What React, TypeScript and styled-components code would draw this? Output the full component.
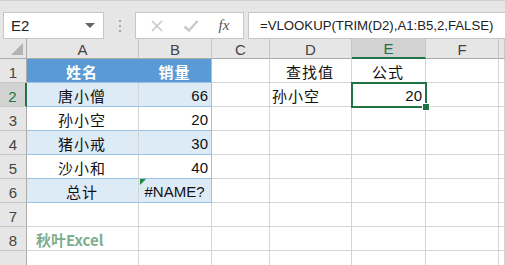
import React from "react";
import styled, { createGlobalStyle } from "styled-components";

const GlobalStyle = createGlobalStyle`
  html, body {
    margin: 0;
    padding: 0;
    background: #ffffff;
    overflow: hidden;
  }
  body {
    font-family: "Liberation Sans", "Noto Sans CJK SC", sans-serif;
  }
`;

const CJK = `"Noto Sans CJK SC", "Liberation Sans", sans-serif`;

const Page = styled.div`
  width: 505px;
  height: 265px;
  background: #e6e6e6;
  display: flex;
  flex-direction: column;
  overflow: hidden;
`;

const FormulaBar = styled.div`
  height: 48px;
  box-sizing: border-box;
  border-top: 1px solid #d0d0d0;
  display: flex;
  align-items: flex-start;
  padding: 11px 0 0 3px;
`;

const NameBox = styled.div`
  width: 101px;
  height: 27px;
  box-sizing: border-box;
  background: #fff;
  border: 1px solid #c6c6c6;
  display: flex;
  align-items: center;
  justify-content: space-between;
  padding: 0 8px 0 7px;
  font-size: 15px;
  color: #222;
`;

const Caret = styled.span`
  width: 0;
  height: 0;
  border-left: 5px solid transparent;
  border-right: 5px solid transparent;
  border-top: 5px solid #666;
`;

const Grip = styled.div`
  width: 31px;
  height: 27px;
  display: flex;
  flex-direction: column;
  align-items: center;
  justify-content: center;
  gap: 3px;

  span {
    width: 2px;
    height: 2px;
    background: #a8a8a8;
  }
`;

const ButtonBox = styled.div`
  width: 109px;
  height: 27px;
  box-sizing: border-box;
  background: #fff;
  border: 1px solid #c6c6c6;
  display: flex;
  align-items: center;
  justify-content: space-around;
  padding: 0 4px;
`;

const Fx = styled.span`
  font-family: "Liberation Serif", serif;
  font-style: italic;
  font-size: 15px;
  color: #555;
`;

const FormulaInput = styled.div`
  flex: 1;
  margin-left: 4px;
  height: 27px;
  box-sizing: border-box;
  background: #fff;
  border: 1px solid #c6c6c6;
  border-right: none;
  display: flex;
  align-items: center;
  padding-left: 11px;
  font-size: 13.2px;
  color: #222;
  white-space: nowrap;
`;

const Sheet = styled.div`
  flex: 1;
  position: relative;
  display: grid;
  grid-template-columns: 27px 112px 73px 58px 82px 74px 73px 1fr;
  grid-template-rows: 20px repeat(9, 24px);
  background: #fff;
`;

const Corner = styled.div`
  background: #e6e6e6;
  border-right: 1px solid #ababab;
  border-bottom: 1px solid #ababab;
  box-sizing: border-box;
  position: relative;

  &::after {
    content: "";
    position: absolute;
    right: 3px;
    bottom: 3px;
    width: 0;
    height: 0;
    border-left: 12px solid transparent;
    border-bottom: 12px solid #b4b4b4;
  }
`;

const ColHead = styled.div<{ $active?: boolean }>`
  background: ${({ $active }) => ($active ? "#d2d2d2" : "#e6e6e6")};
  box-sizing: border-box;
  border-right: 1px solid #c6c6c6;
  border-bottom: ${({ $active }) => ($active ? "2px solid #217346" : "1px solid #ababab")};
  display: flex;
  align-items: center;
  justify-content: center;
  font-size: 15px;
  color: ${({ $active }) => ($active ? "#217346" : "#444")};
  padding-top: 1px;
`;

const RowHead = styled.div<{ $active?: boolean }>`
  background: ${({ $active }) => ($active ? "#d2d2d2" : "#e6e6e6")};
  box-sizing: border-box;
  border-right: ${({ $active }) => ($active ? "2px solid #217346" : "1px solid #ababab")};
  border-bottom: 1px solid #c6c6c6;
  display: flex;
  align-items: center;
  justify-content: center;
  padding-top: 3px;
  font-size: 15px;
  color: ${({ $active }) => ($active ? "#217346" : "#444")};
`;

type Tone = "head" | "band" | "plain" | "none";

const fills: Record<Tone, string> = {
  head: "#5b9bd5",
  band: "#ddebf7",
  plain: "#ffffff",
  none: "#ffffff",
};

const Cell = styled.div<{
  $tone?: Tone;
  $align?: "left" | "center" | "right";
  $cjk?: boolean;
  $blueRight?: boolean;
}>`
  position: relative;
  box-sizing: border-box;
  background: ${({ $tone = "none" }) => fills[$tone]};
  border-right: 1px solid
    ${({ $tone = "none", $blueRight }) =>
      $blueRight ? "#9bc2e6" : $tone === "head" ? "#5b9bd5" : "#d4d4d4"};
  border-bottom: 1px solid ${({ $tone = "none" }) => ($tone === "none" ? "#d4d4d4" : "#9bc2e6")};
  display: flex;
  align-items: center;
  justify-content: ${({ $align = "left" }) =>
    $align === "center" ? "center" : $align === "right" ? "flex-end" : "flex-start"};
  padding: 1px 3px 0 2px;
  font-family: ${({ $cjk }) => ($cjk ? CJK : `"Liberation Sans", sans-serif`)};
  font-size: 15px;
  font-weight: ${({ $tone }) => ($tone === "head" ? 700 : 400)};
  color: ${({ $tone }) => ($tone === "head" ? "#ffffff" : "#111")};
  letter-spacing: ${({ $cjk }) => ($cjk ? "1px" : "0")};
  white-space: nowrap;
`;

const ErrorFlag = styled.span`
  position: absolute;
  left: 1px;
  top: 0;
  width: 0;
  height: 0;
  border-top: 6px solid #1e8a3c;
  border-right: 6px solid transparent;
`;

const Watermark = styled.span`
  font-family: ${CJK};
  font-weight: 700;
  font-size: 15px;
  color: #7fae8d;
  padding-left: 7px;
  letter-spacing: 0;
`;

const Selection = styled.div`
  position: absolute;
  left: 351px;
  top: 43px;
  width: 76px;
  height: 26px;
  box-sizing: border-box;
  border: 2px solid #217346;
  pointer-events: none;

  &::after {
    content: "";
    position: absolute;
    right: -5px;
    bottom: -5px;
    width: 6px;
    height: 6px;
    background: #217346;
    border: 1px solid #fff;
  }
`;

const CrossIcon = () => (
  <svg width="14" height="14" viewBox="0 0 14 14">
    <path d="M2 2 L12 12 M12 2 L2 12" stroke="#c8c8c8" strokeWidth="1.6" fill="none" />
  </svg>
);

const CheckIcon = () => (
  <svg width="16" height="14" viewBox="0 0 16 14">
    <path d="M1.5 7.5 L6 11.5 L14.5 2" stroke="#c8c8c8" strokeWidth="2.4" fill="none" />
  </svg>
);

const columns = ["A", "B", "C", "D", "E", "F", ""];

type Row = {
  a?: React.ReactNode;
  b?: React.ReactNode;
  d?: string;
  e?: string;
  tone?: Tone;
  aCjk?: boolean;
  bCjk?: boolean;
};

const rows: Row[] = [
  { a: "姓名", b: "销量", d: "查找值", e: "公式", tone: "head", aCjk: true, bCjk: true },
  { a: "唐小僧", b: "66", d: "孙小空", e: "20", tone: "band", aCjk: true },
  { a: "孙小空", b: "20", tone: "plain", aCjk: true },
  { a: "猪小戒", b: "30", tone: "band", aCjk: true },
  { a: "沙小和", b: "40", tone: "plain", aCjk: true },
  { a: "总计", b: "#NAME?", tone: "band", aCjk: true },
  {},
  {},
  {},
];

export default function App() {
  return (
    <>
      <GlobalStyle />
      <Page>
        <FormulaBar>
          <NameBox>
            E2
            <Caret />
          </NameBox>
          <Grip>
            <span />
            <span />
            <span />
          </Grip>
          <ButtonBox>
            <CrossIcon />
            <CheckIcon />
            <Fx>fx</Fx>
          </ButtonBox>
          <FormulaInput>=VLOOKUP(TRIM(D2),A1:B5,2,FALSE)</FormulaInput>
        </FormulaBar>
        <Sheet>
          <Corner />
          {columns.map((c, i) => (
            <ColHead key={i} $active={c === "E"}>
              {c}
            </ColHead>
          ))}
          {rows.map((r, i) => {
            const n = i + 1;
            const tone = r.tone;
            return (
              <React.Fragment key={n}>
                {/* row 9 is only a sliver at the window edge, its number falls outside */}
                <RowHead $active={n === 2}>{n < 9 ? n : null}</RowHead>
                <Cell $tone={tone} $align={n === 8 ? "left" : "center"} $cjk={r.aCjk}>
                  {n === 8 ? <Watermark>秋叶Excel</Watermark> : r.a}
                </Cell>
                <Cell
                  $tone={tone}
                  $align={tone === "head" || n === 6 ? "center" : "right"}
                  $cjk={r.bCjk}
                  $blueRight={!!tone}
                >
                  {n === 6 && <ErrorFlag />}
                  {r.b}
                </Cell>
                <Cell />
                <Cell $align={n === 1 ? "center" : "left"} $cjk>
                  {r.d}
                </Cell>
                <Cell $align={n === 1 ? "center" : "right"} $cjk={n === 1}>
                  {r.e}
                </Cell>
                <Cell />
                <Cell />
              </React.Fragment>
            );
          })}
          <Selection />
        </Sheet>
      </Page>
    </>
  );
}
